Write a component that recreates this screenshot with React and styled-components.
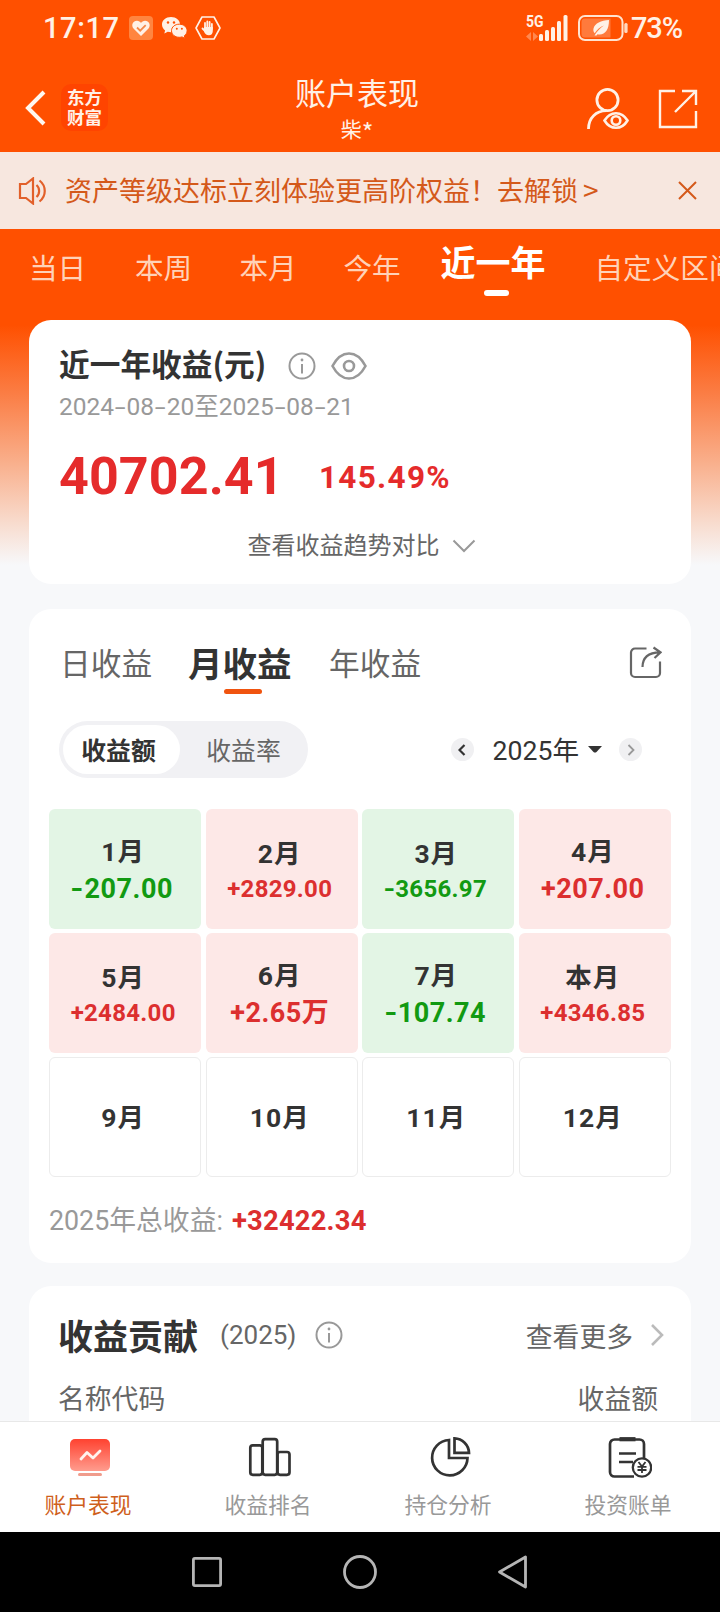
import * as React from "react";
import styled, { createGlobalStyle, css } from "styled-components";

const colors = {
  brand: "#ff5000",
  ink: "#333333",
  text: "#666666",
  muted: "#999999",
  red: "#e52b2b",
  green: "#129a12",
  page: "#f7f8fa",
  cream: "#fff1e6",
};

const cjk = `"Noto Sans CJK SC", sans-serif`;
const digits = `Roboto, "Noto Sans CJK SC", sans-serif`;

const GlobalStyle = createGlobalStyle`
  html, body {
    margin: 0;
    background: #000;
  }
  body {
    font-family: ${cjk};
    color: ${colors.ink};
    overflow: hidden;
  }
  svg {
    display: block;
    flex: none;
  }
`;

const Screen = styled.div`
  width: 720px;
  height: 1612px;
  display: flex;
  flex-direction: column;
  overflow: hidden;
  background: ${colors.page};
  white-space: nowrap;
`;

/* Status bar */

const StatusBar = styled.div`
  height: 54px;
  flex: none;
  box-sizing: border-box;
  padding: 1px 38px 0 43px;
  display: flex;
  justify-content: space-between;
  align-items: center;
  background: ${colors.brand};
  color: ${colors.cream};
  font-family: ${digits};
  font-weight: 500;
  font-size: 29px;
`;

const StatusGroup = styled.div`
  display: flex;
  align-items: center;
`;

const Clock = styled.span`
  letter-spacing: 0.6px;
  margin-right: 9px;
`;

const Percent = styled.span`
  letter-spacing: -1.1px;
  margin-left: 3px;
`;

/* Header */

const Header = styled.header`
  height: 98px;
  flex: none;
  box-sizing: border-box;
  padding: 0 22px 0 25px;
  display: grid;
  grid-template-columns: 102px 1fr 111px;
  background: ${colors.brand};
  color: ${colors.cream};
`;

const HeaderLeft = styled.div`
  display: flex;
  align-items: center;
  gap: 15px;
`;

const Logo = styled.div`
  width: 47px;
  height: 47px;
  margin-top: 8px;
  border-radius: 10px;
  background: #ff4400;
  display: flex;
  align-items: center;
  justify-content: center;
  font-weight: 700;
  font-size: 17.5px;
  line-height: 20px;
`;

const HeaderTitle = styled.div`
  display: flex;
  flex-direction: column;
  align-items: center;
  padding-top: 19px;
`;

const Title = styled.h1`
  margin: 0;
  font-weight: 400;
  font-size: 31px;
  line-height: 38px;
`;

const Account = styled.div`
  font-size: 21px;
  line-height: 30px;
  margin-top: 2px;
`;

const Mask = styled.span`
  font-size: 25px;
  line-height: 20px;
  vertical-align: -5px;
`;

const HeaderActions = styled.div`
  display: flex;
  align-items: center;
  justify-content: space-between;
  padding-top: 11px;
`;

/* Notice */

const Notice = styled.div`
  height: 77px;
  flex: none;
  box-sizing: border-box;
  padding: 0 23px 0 18px;
  display: flex;
  align-items: center;
  background: #f7e7df;
  color: #d4591a;
  font-size: 27px;
`;

const NoticeText = styled.div`
  flex: 1;
  margin-left: 18px;
  line-height: 40px;
  padding-bottom: 2px;
`;

const NoticeArrow = styled.span`
  margin-left: 5px;
  font-size: 28px;
`;

/* Hero */

const Hero = styled.div`
  flex: none;
  height: 380px;
  background: linear-gradient(
    to bottom,
    ${colors.brand} 0,
    ${colors.brand} 96px,
    #fb7a40 160px,
    #f9ae8a 232px,
    #f8ddd0 296px,
    ${colors.page} 336px
  );
`;

const RangeTabs = styled.nav`
  height: 91px;
  padding-left: 29px;
  display: flex;
  overflow: hidden;
`;

const RangeTab = styled.div`
  position: relative;
  flex: none;
  width: ${({ $width }) => $width}px;
  font-size: ${({ $active }) => ($active ? 35 : 28.6)}px;
  font-weight: ${({ $active }) => ($active ? 700 : 400)};
  color: ${({ $active }) => ($active ? "#fff" : "#ffd2b8")};
  line-height: ${({ $active }) => ($active ? 64 : 76)}px;
`;

const RangeMark = styled.i`
  position: absolute;
  left: 43px;
  top: 61px;
  width: 25px;
  height: 6px;
  border-radius: 3px;
  background: #fff;
`;

/* Cards */

const Card = styled.section`
  flex: none;
  margin: 0 29px;
  box-sizing: border-box;
  background: #fff;
  border-radius: 22px;
`;

const SummaryCard = styled(Card)`
  height: 264px;
  padding: 24px 31px 0 30px;
`;

const SummaryHead = styled.div`
  display: flex;
  align-items: center;
  height: 43px;
`;

const SummaryTitle = styled.h2`
  margin: 0 22px 0 0;
  padding-bottom: 5px;
  font-size: 30.7px;
  line-height: 38px;
  font-weight: 700;
`;

const DateRange = styled.div`
  font-family: ${digits};
  font-size: 24.5px;
  line-height: 32px;
  margin-top: 4px;
  color: ${colors.muted};
`;

const Dash = styled.span`
  display: inline-block;
  width: 12.5px;
  text-align: center;
  transform: scaleX(1.6);
`;

const Figures = styled.div`
  display: flex;
  align-items: center;
  height: 60px;
  margin-top: 24px;
  font-family: ${digits};
  font-weight: 700;
  color: ${colors.red};
`;

const Amount = styled.span`
  font-size: 52px;
  line-height: 60px;
  width: 260px;
  letter-spacing: 0.1px;
`;

const Rate = styled.span`
  padding-top: 2px;
  font-size: 31.5px;
  line-height: 58px;
  letter-spacing: 1.3px;
`;

const TrendLink = styled.div`
  display: flex;
  align-items: center;
  justify-content: center;
  gap: 12px;
  height: 36px;
  margin-top: 18px;
  padding-left: 4px;
  font-size: 24px;
  color: ${colors.text};

  svg {
    margin-top: 5px;
  }
`;

const EarningsCard = styled(Card)`
  height: 654px;
  padding: 0 20px;
`;

const EarningsHead = styled.div`
  height: 112px;
  padding: 0 9px 0 11px;
  display: flex;
  align-items: flex-start;
`;

const EarningsTab = styled.div`
  position: relative;
  width: ${({ $width }) => $width}px;
  font-size: ${({ $active }) => ($active ? 34.5 : 30.7)}px;
  font-weight: ${({ $active }) => ($active ? 700 : 400)};
  color: ${({ $active }) => ($active ? colors.ink : colors.text)};
  line-height: 106px;
`;

const EarningsMark = styled.i`
  position: absolute;
  left: 36px;
  top: 80px;
  width: 38px;
  height: 5px;
  border-radius: 3px;
  background: #f0540f;
`;

const ShareSlot = styled.div`
  margin: 37px 0 0 auto;
`;

const Filters = styled.div`
  display: flex;
  align-items: center;
  justify-content: space-between;
  height: 57px;
  padding: 0 29px 0 10px;
`;

const Segmented = styled.div`
  width: 249px;
  height: 57px;
  box-sizing: border-box;
  padding: 4px;
  display: flex;
  border-radius: 29px;
  background: #f1f1f4;
`;

const Segment = styled.div`
  width: ${({ $active }) => ($active ? 117 : 124)}px;
  height: 49px;
  box-sizing: border-box;
  border-radius: 25px;
  text-align: center;
  font-size: 24.8px;
  line-height: 49px;
  ${({ $active }) =>
    $active
      ? css`
          background: #fff;
          padding-right: 6px;
          font-weight: 700;
        `
      : css`
          color: ${colors.text};
          padding-left: 3px;
        `}
`;

const YearPicker = styled.div`
  display: flex;
  align-items: center;
  font-family: ${digits};
  font-size: 26.6px;
`;

const YearLabel = styled.span`
  margin: 0 9px 0 19px;
  padding-bottom: 2px;
`;

const RoundButton = styled.div`
  width: 23px;
  height: 23px;
  border-radius: 50%;
  background: #f0f0f2;
  display: flex;
  align-items: center;
  justify-content: center;
`;

const MonthGrid = styled.div`
  display: grid;
  grid-template-columns: repeat(4, 152.4px);
  grid-auto-rows: 120px;
  justify-content: space-between;
  row-gap: 4px;
  margin-top: 31px;
`;

const tones = {
  up: css`
    background: #fde8e7;
    color: #dc2f2f;
  `,
  down: css`
    background: #e3f5e5;
    color: ${colors.green};
  `,
  none: css`
    background: #fff;
    border: 1px solid #ececec;
  `,
};

const MonthCell = styled.div`
  box-sizing: border-box;
  padding-right: 4px;
  border-radius: 6px;
  display: flex;
  flex-direction: column;
  align-items: center;
  justify-content: center;
  font-family: ${digits};
  font-weight: 700;
  ${({ $tone }) => tones[$tone]}
`;

const MonthName = styled.div`
  font-size: 26.5px;
  line-height: 37px;
  letter-spacing: 1px;
  font-weight: 700;
  color: ${colors.ink};
`;

const MonthValue = styled.div`
  font-size: ${({ $long }) => ($long ? 24 : 27)}px;
  line-height: ${({ $long }) => ($long ? 30 : 34)}px;
  padding-top: 2px;
  letter-spacing: ${({ $long }) => ($long ? 0.3 : 0.5)}px;
`;

const Minus = styled.span`
  display: inline-block;
  transform: scaleX(1.25);
  transform-origin: right;
`;

const YearTotal = styled.div`
  display: flex;
  align-items: center;
  margin-top: 21px;
  height: 40px;
  font-family: ${digits};
  font-size: 26.8px;
  color: ${colors.muted};
`;

const TotalValue = styled.strong`
  margin: 5px 0 0 9px;
  color: #dc2f2f;
  font-size: 27.4px;
  letter-spacing: 0.2px;
  font-weight: 700;
`;

const ContributionCard = styled(Card)`
  flex: 1 1 0;
  min-height: 0;
  overflow: hidden;
  margin-top: 23px;
  padding: 0 27px 0 29px;
  border-radius: 22px 22px 0 0;
`;

const ContributionHead = styled.div`
  display: flex;
  align-items: center;
  height: 98px;
`;

const ContributionTitle = styled.h2`
  margin: 0 22px 0 0;
  font-size: 35px;
  font-weight: 700;
  line-height: 50px;
`;

const ContributionYear = styled.span`
  font-family: ${digits};
  font-size: 26px;
  color: ${colors.text};
  margin-right: 19px;
`;

const More = styled.div`
  margin-left: auto;
  display: flex;
  align-items: center;
  gap: 17px;
  font-size: 26.8px;
  color: ${colors.text};
`;

const TableHead = styled.div`
  display: flex;
  justify-content: space-between;
  padding: 0 6px 0 0;
  font-size: 26.8px;
  line-height: 27px;
  color: ${colors.text};
`;

/* Bottom bars */

const TabBar = styled.nav`
  flex: none;
  height: 111px;
  box-sizing: border-box;
  border-top: 1px solid #e8e8e8;
  background: #fff;
  display: grid;
  grid-template-columns: repeat(4, 180px);
`;

const TabItem = styled.div`
  display: flex;
  flex-direction: column;
  align-items: center;
  padding-top: 14px;
  font-size: 21.8px;
  line-height: 30px;
  color: ${({ $active }) => ($active ? "#cf5f1c" : colors.muted)};
`;

const TabLabel = styled.span`
  margin: 9px 4px 0 0;
`;

const SystemBar = styled.div`
  flex: none;
  height: 80px;
  background: #000;
  display: flex;
  justify-content: center;
  align-items: center;
  gap: 119px;
`;

/* Icons */

const HeartBadge = () => (
  <svg width="24" height="24" viewBox="0 0 24 24">
    <rect width="24" height="24" rx="4" fill="#ff8540" />
    <path d="M12 20 4.5 12.6C1.6 9 4.4 4.6 8 4.8c1.800.1 3.100.9 4 2.200.9-1.300 2.200-2.100 4-2.200 3.600-.2 6.400 4.200 3.500 7.800Z" fill="#fff1e6" />
    <path d="m8 11.500 3.200 3.200 5.500-5.500" fill="none" stroke="#f5894a" strokeWidth="1.800" />
  </svg>
);

const WeChat = () => (
  <svg width="27" height="24" viewBox="0 0 27 24" style={{ margin: "0 7px 0 8px" }}>
    <path d="M10 1C4.800 1 1 4.300 1 8.600c0 2.400 1.200 4.400 3.100 5.800L3.300 17.500l3.500-1.700c1 .3 2 .4 3.200.4 5.200 0 9-3.200 9-7.600S15.200 1 10 1Z" fill="#fff1e6" />
    <path d="M18.300 8.200c-4.400 0-7.800 2.800-7.800 6.500s3.400 6.600 7.800 6.600c1 0 2-.2 2.800-.4l2.900 1.600-.7-2.700c1.700-1.200 2.800-3 2.800-5.100 0-3.700-3.400-6.500-7.800-6.500Z" fill="#fff1e6" stroke={colors.brand} />
    <g fill={colors.brand}>
      <circle cx="7" cy="6.500" r="1.200" />
      <circle cx="13" cy="6.500" r="1.200" />
      <circle cx="15.800" cy="12.700" r="1" />
      <circle cx="20.900" cy="12.700" r="1" />
    </g>
  </svg>
);

const HandHex = () => (
  <svg width="26" height="24" viewBox="0 0 26 24" fill="none" stroke="#fff1e6">
    <path d="M7 1h12l6 11-6 11H7L1 12Z" strokeWidth="1.600" strokeLinejoin="round" />
    <path d="M10 13V7M12.300 12V5.500M14.600 12V6M16.900 13V8M10 15l-2.500-2.500" strokeWidth="1.800" strokeLinecap="round" />
    <path d="M9.100 11h8.700v4c0 2.700-1.500 4.300-4 4.300-2.300 0-3.300-1-4.700-3.300Z" fill="#fff1e6" stroke="none" />
  </svg>
);

const Signal = () => (
  <svg width="44" height="28" viewBox="0 0 44 28" fill="#fff1e6" style={{ marginRight: 9 }}>
    <text x="1" y="13" fontSize="17" fontWeight="700" textLength="17.500" lengthAdjust="spacingAndGlyphs">
      5G
    </text>
    <path d="m6 18-5 4.500L6 27ZM8 18l5 4.500L8 27Z" opacity=".35" />
    <rect x="14" y="20" width="4" height="7" rx="1.500" />
    <rect x="20" y="16" width="4" height="11" rx="1.500" />
    <rect x="26" y="13" width="4" height="14" rx="1.500" />
    <rect x="32" y="7" width="4" height="20" rx="1.500" />
    <rect x="38.500" y="1" width="4" height="26" rx="1.500" />
  </svg>
);

const Battery = () => (
  <svg width="50" height="26" viewBox="0 0 50 26">
    <rect x="1" y="1" width="43.500" height="24" rx="6" fill="none" stroke="#ffe3cf" strokeWidth="2" />
    <path d="M7 3.500h25.500v19H7A3.500 3.500 0 0 1 3.500 19V7A3.500 3.500 0 0 1 7 3.500Z" fill="#ff7a3c" />
    <path d="M31 5c-8 .5-14 3-15.500 8.500-.5 2 .2 3.600 1.200 4.700C19 14.500 22 12 26 10.500c-4 2.500-7 6-9.500 10h2l1-1.200c7 1.500 11.500-4 11.500-14.300Z" fill="#fff1e6" />
    <rect x="46.300" y="8" width="3.300" height="10" rx="1.500" fill="#ffd9c0" />
  </svg>
);

const BackIcon = () => (
  <svg width="21" height="36" viewBox="0 0 21 36" fill="none" stroke="#fff8f0" strokeWidth="4" style={{ marginTop: 10 }}>
    <path d="M19 2 3 18l16 16" />
  </svg>
);

const UserEyeIcon = () => (
  <svg width="42" height="42" viewBox="0 0 42 42" fill="none" stroke="#fff1e6" strokeWidth="2.800">
    <circle cx="20.500" cy="12" r="10.600" />
    <path d="M1.500 41C1.500 29.500 9 23 19.500 22.700" />
    <path d="M17.500 32.500c3-5 6.800-7.300 11.500-7.300s8.500 2.300 11.500 7.300C37.500 37.500 33.700 39.800 29 39.800s-8.500-2.300-11.500-7.300Z" strokeWidth="2.600" />
    <circle cx="29" cy="32.500" r="4.300" strokeWidth="2.600" />
  </svg>
);

const OpenIcon = () => (
  <svg width="40" height="40" viewBox="0 0 40 40" fill="none" stroke="#fff1e6" strokeWidth="2.400">
    <path d="M17 2H2v36h36V22M24 2h14v14M38 2 17 23" />
  </svg>
);

const SpeakerIcon = () => (
  <svg width="29" height="28" viewBox="0 0 29 28" fill="none" stroke="#e2602a" strokeWidth="2.200">
    <path d="M2 7h6l7-5.500v25L8 21H2Z" />
    <path d="M18.500 8c3.500 3 3.500 9 0 12M21.500 3.500c7 5.500 7 15.500 0 21" />
  </svg>
);

const CloseIcon = () => (
  <svg width="19" height="19" viewBox="0 0 19 19" stroke="#d4591a" strokeWidth="2">
    <path d="m1 1 17 17M18 1 1 18" />
  </svg>
);

const InfoIcon = () => (
  <svg width="28" height="28" viewBox="0 0 28 28" fill="none" stroke="#999" strokeWidth="2">
    <circle cx="14" cy="14" r="12.500" />
    <path d="M14 12v9.500" />
    <circle cx="14" cy="8" r="1.400" fill="#999" stroke="none" />
  </svg>
);

const EyeIcon = () => (
  <svg width="36" height="28" viewBox="0 0 36 28" fill="none" stroke="#999" strokeWidth="2.600" style={{ marginLeft: 15 }}>
    <path d="M1.500 14C6 5.500 11.500 1.500 18 1.500S30 5.500 34.500 14C30 22.500 24.500 26.500 18 26.500S6 22.500 1.500 14Z" />
    <circle cx="18" cy="14" r="5" />
  </svg>
);

const Chevron = ({ width, height, d, stroke, strokeWidth }) => (
  <svg width={width} height={height} viewBox={`0 0 ${width} ${height}`} fill="none" stroke={stroke} strokeWidth={strokeWidth}>
    <path d={d} />
  </svg>
);

const ShareIcon = () => (
  <svg width="33" height="33" viewBox="0 0 33 33" fill="none" stroke="#666" strokeWidth="2.200">
    <path d="M17.500 2.500H6a4 4 0 0 0-4 4V27a4 4 0 0 0 4 4h21a4 4 0 0 0 4-4V15.500" />
    <path d="M13.500 21C13.500 11.500 19 6.500 31 6.300M24.500 1.500l7 4.800-6 5.700" />
  </svg>
);

const AccountTabIcon = () => (
  <svg width="44" height="44" viewBox="0 0 44 44">
    <defs>
      <linearGradient id="screen" x1="0" y1="0" x2="0" y2="1">
        <stop offset="0" stopColor="#ff4230" />
        <stop offset="1" stopColor="#ff9c8e" />
      </linearGradient>
    </defs>
    <rect x="2" y="3" width="40" height="32" rx="5" fill="url(#screen)" />
    <path d="m13 23 6-6.500 6 5.500 7-7" fill="none" stroke="#fff3ee" strokeWidth="2.800" strokeLinecap="round" strokeLinejoin="round" />
    <rect x="10" y="37" width="24" height="3" rx="1.500" fill="#f09c8c" />
  </svg>
);

const RankTabIcon = () => (
  <svg width="44" height="44" viewBox="0 0 44 44" fill="none" stroke="#333" strokeWidth="2.700">
    <rect x="2.300" y="9.300" width="12" height="29.500" rx="2.500" />
    <rect x="14.700" y="3.200" width="14.500" height="35.600" rx="2.500" />
    <rect x="29.500" y="16" width="12" height="22.800" rx="2.500" />
  </svg>
);

const PieTabIcon = () => (
  <svg width="44" height="44" viewBox="0 0 44 44" fill="none" stroke="#333" strokeWidth="2.700">
    <path d="M21 4a17.700 17.700 0 1 0 18.500 18H21Z" />
    <path d="M26.500 2.300V16.800H41A15 15 0 0 0 26.500 2.300Z" />
  </svg>
);

const BillTabIcon = () => (
  <svg width="44" height="44" viewBox="0 0 44 44" fill="none" stroke="#333" strokeWidth="2.700">
    <path d="M26 40.500H6.500a4.500 4.500 0 0 1-4.500-4.500V8a4.500 4.500 0 0 1 4.500-4.500h25A4.500 4.500 0 0 1 36 8v14" />
    <path d="M11.500 3.200h16" strokeWidth="4.200" />
    <path d="M11 17.500h17M11 26h14" />
    <circle cx="34" cy="31.500" r="9.200" fill="#fff" strokeWidth="2.300" />
    <path d="m30.500 26 3.500 4.500 3.500-4.500M34 30.500V37M29.500 30.800h9M29.500 34h9" strokeWidth="1.800" />
  </svg>
);

const navStroke = { fill: "none", stroke: "#b5b5b5", strokeWidth: 2.8, strokeLinejoin: "round" };

/* Data */

const ranges = [
  { label: "当日", width: 106 },
  { label: "本周", width: 104.5 },
  { label: "本月", width: 104 },
  { label: "今年", width: 97 },
  { label: "近一年", width: 154, active: true },
  { label: "自定义区间", width: 150 },
];

const months = [
  { name: "1月", value: "-207.00" },
  { name: "2月", value: "+2829.00" },
  { name: "3月", value: "-3656.97" },
  { name: "4月", value: "+207.00" },
  { name: "5月", value: "+2484.00" },
  { name: "6月", value: "+2.65万" },
  { name: "7月", value: "-107.74" },
  { name: "本月", value: "+4346.85" },
  { name: "9月" },
  { name: "10月" },
  { name: "11月" },
  { name: "12月" },
];

const tabs = [
  { label: "账户表现", Icon: AccountTabIcon, active: true },
  { label: "收益排名", Icon: RankTabIcon },
  { label: "持仓分析", Icon: PieTabIcon },
  { label: "投资账单", Icon: BillTabIcon },
];

const toneOf = value => {
  if (!value) return "none";
  return value[0] === "-" ? "down" : "up";
};

const Month = ({ name, value }) => {
  const tone = toneOf(value);
  return (
    <MonthCell $tone={tone}>
      <MonthName>{name}</MonthName>
      {value && (
        <MonthValue $long={value.length > 7}>
          {tone === "down" && <Minus>-</Minus>}
          {tone === "down" ? value.slice(1) : value}
        </MonthValue>
      )}
    </MonthCell>
  );
};

const App = () => (
  <>
    <GlobalStyle />
    <Screen>
      <StatusBar>
        <StatusGroup>
          <Clock>17:17</Clock>
          <HeartBadge />
          <WeChat />
          <HandHex />
        </StatusGroup>
        <StatusGroup>
          <Signal />
          <Battery />
          <Percent>73%</Percent>
        </StatusGroup>
      </StatusBar>

      <Header>
        <HeaderLeft>
          <BackIcon />
          <Logo>
            <span>
              东方
              <br />
              财富
            </span>
          </Logo>
        </HeaderLeft>
        <HeaderTitle>
          <Title>账户表现</Title>
          <Account>
            柴<Mask>*</Mask>
          </Account>
        </HeaderTitle>
        <HeaderActions>
          <UserEyeIcon />
          <OpenIcon />
        </HeaderActions>
      </Header>

      <Notice>
        <SpeakerIcon />
        <NoticeText>
          资产等级达标立刻体验更高阶权益！去解锁
          <NoticeArrow>&gt;</NoticeArrow>
        </NoticeText>
        <CloseIcon />
      </Notice>

      <Hero>
        <RangeTabs>
          {ranges.map(({ label, width, active }) => (
            <RangeTab key={label} $width={width} $active={active}>
              {label}
              {active && <RangeMark />}
            </RangeTab>
          ))}
        </RangeTabs>
        <SummaryCard>
          <SummaryHead>
            <SummaryTitle>近一年收益(元)</SummaryTitle>
            <InfoIcon />
            <EyeIcon />
          </SummaryHead>
          <DateRange>
            2024<Dash>-</Dash>08<Dash>-</Dash>20至2025<Dash>-</Dash>08<Dash>-</Dash>21
          </DateRange>
          <Figures>
            <Amount>40702.41</Amount>
            <Rate>145.49%</Rate>
          </Figures>
          <TrendLink>
            查看收益趋势对比
            <Chevron width={24} height={14} d="m1.500 1.500 10.500 10.500L22.500 1.500" stroke="#999" strokeWidth={2} />
          </TrendLink>
        </SummaryCard>
      </Hero>

      <EarningsCard>
        <EarningsHead>
          <EarningsTab $width={128}>日收益</EarningsTab>
          <EarningsTab $width={141} $active>
            月收益
            <EarningsMark />
          </EarningsTab>
          <EarningsTab $width={100}>年收益</EarningsTab>
          <ShareSlot>
            <ShareIcon />
          </ShareSlot>
        </EarningsHead>
        <Filters>
          <Segmented>
            <Segment $active>收益额</Segment>
            <Segment>收益率</Segment>
          </Segmented>
          <YearPicker>
            <RoundButton>
              <Chevron width={8} height={12} d="M6.500 1 1.500 6l5 5" stroke="#333" strokeWidth={2.2} />
            </RoundButton>
            <YearLabel>2025年</YearLabel>
            <svg width="14" height="7" viewBox="0 0 14 7" fill="#333" style={{ marginRight: 17 }}>
              <path d="M0 0h14L8.500 6q-1.500 1-3 0Z" />
            </svg>
            <RoundButton>
              <Chevron width={8} height={12} d="m1.500 1 5 5-5 5" stroke="#999" strokeWidth={1.8} />
            </RoundButton>
          </YearPicker>
        </Filters>
        <MonthGrid>
          {months.map(month => (
            <Month key={month.name} {...month} />
          ))}
        </MonthGrid>
        <YearTotal>
          2025年总收益:
          <TotalValue>+32422.34</TotalValue>
        </YearTotal>
      </EarningsCard>

      <ContributionCard>
        <ContributionHead>
          <ContributionTitle>收益贡献</ContributionTitle>
          <ContributionYear>(2025)</ContributionYear>
          <InfoIcon />
          <More>
            查看更多
            <Chevron width={14} height={24} d="m2 2 10 10L2 22" stroke="#bbb" strokeWidth={2.6} />
          </More>
        </ContributionHead>
        <TableHead>
          <span>名称代码</span>
          <span>收益额</span>
        </TableHead>
      </ContributionCard>

      <TabBar>
        {tabs.map(({ label, Icon, active }) => (
          <TabItem key={label} $active={active}>
            <Icon />
            <TabLabel>{label}</TabLabel>
          </TabItem>
        ))}
      </TabBar>
      <SystemBar>
        <svg width="34" height="34" viewBox="0 0 34 34" {...navStroke}>
          <rect x="3.400" y="3.400" width="27.200" height="27.200" rx="1.500" />
        </svg>
        <svg width="34" height="34" viewBox="0 0 34 34" {...navStroke}>
          <circle cx="17" cy="17" r="15.500" />
        </svg>
        <svg width="34" height="34" viewBox="0 0 34 34" {...navStroke}>
          <path d="M29.500 2v30L3.500 17Z" />
        </svg>
      </SystemBar>
    </Screen>
  </>
);

export default App;
